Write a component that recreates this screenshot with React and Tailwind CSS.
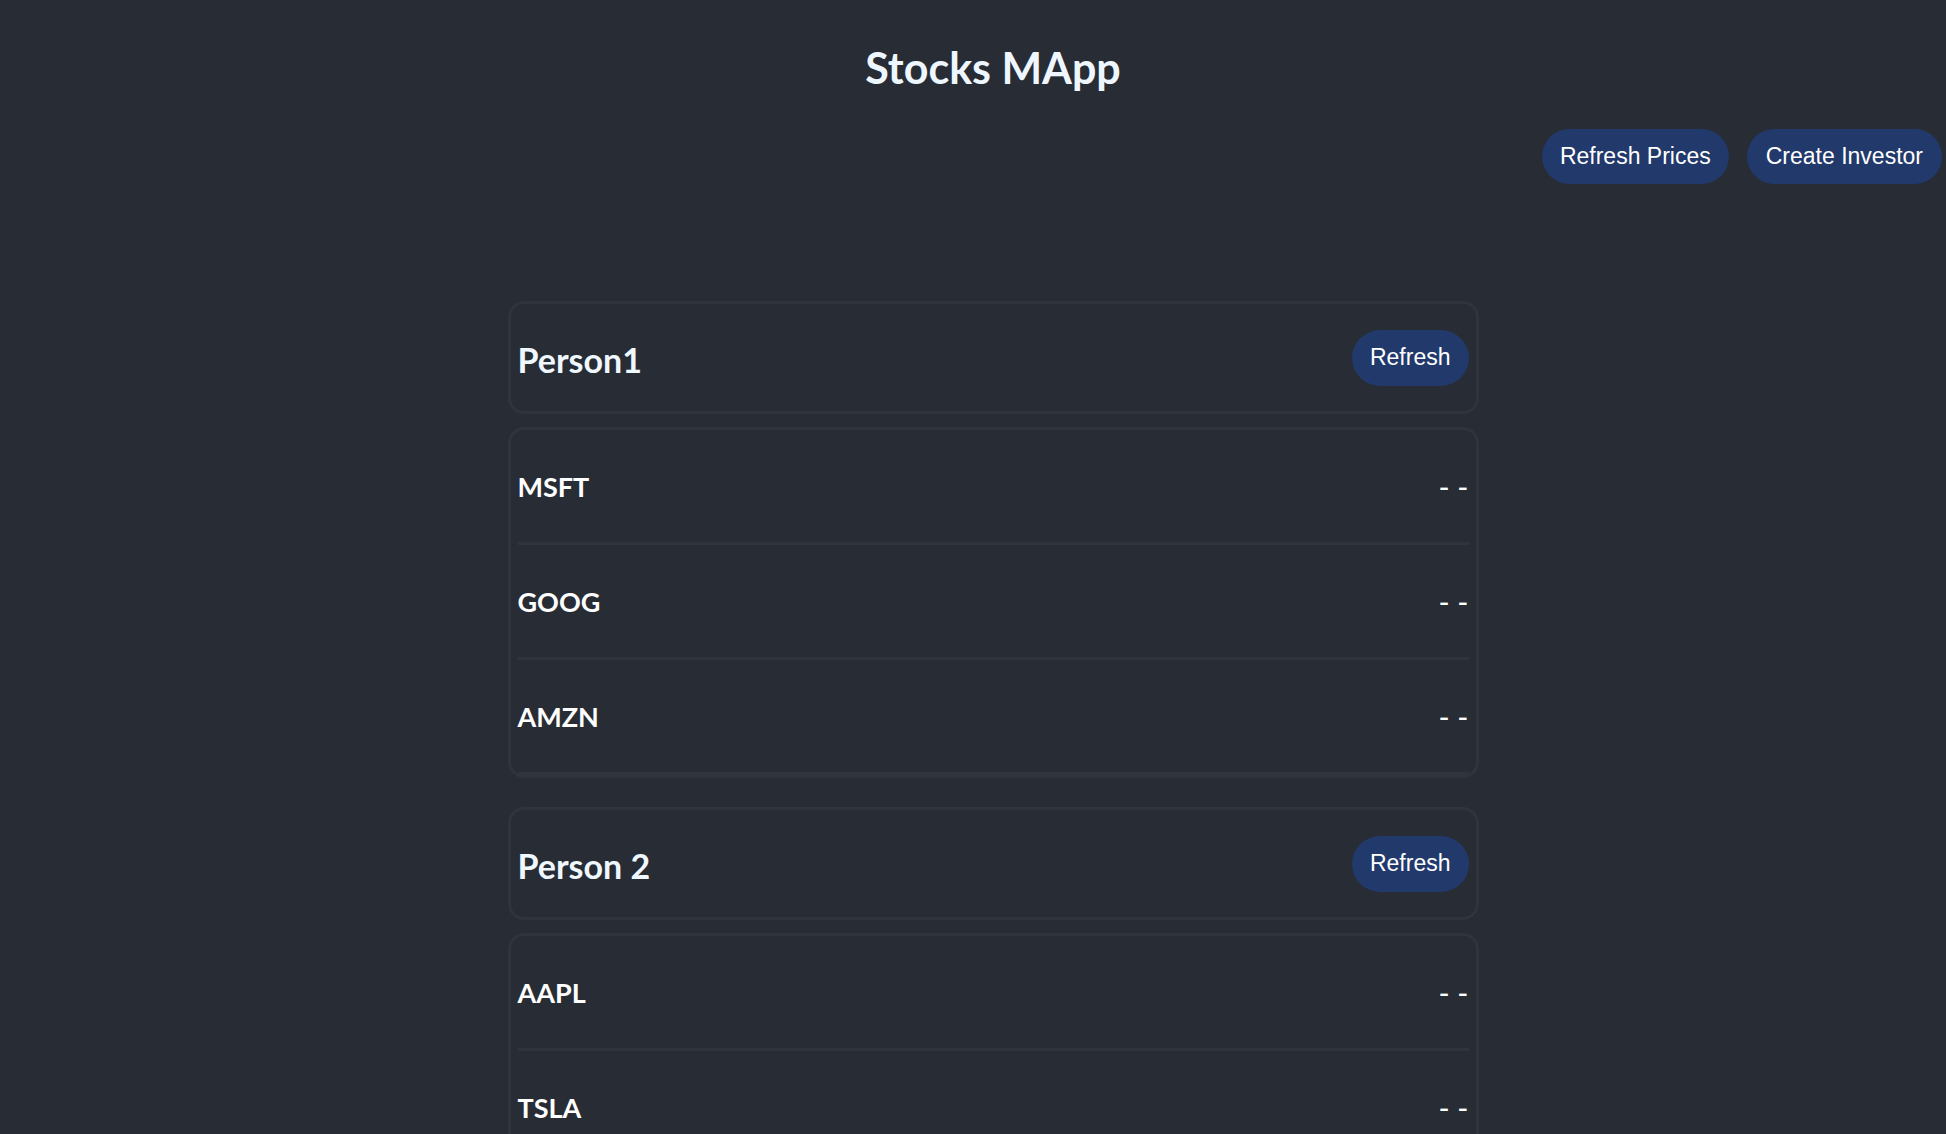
import React from "react";

const investors = [
  { name: "Person1", stocks: ["MSFT", "GOOG", "AMZN"] },
  { name: "Person 2", stocks: ["AAPL", "TSLA"] },
];

function PillButton({ children, className = "" }) {
  return (
    <button
      className={
        "rounded-full bg-[#22396b] text-white text-[23px] font-['Liberation_Sans',Arial,sans-serif] leading-none flex items-center justify-center " +
        className
      }
    >
      {children}
    </button>
  );
}

export default function App() {
  return (
    <div className="min-h-screen w-full bg-[#282c34] font-['Lato',sans-serif] pb-10">
      <div className="pl-[40px] pt-[40px] h-[96px]">
        <h1 className="text-center text-[43px] leading-[56px] font-bold text-[#eef6ff]">
          Stocks MApp
        </h1>
      </div>
      <div className="flex justify-end gap-[18px] pr-[4px] mt-[33px]">
        <PillButton className="h-[55px] px-[18px]">Refresh Prices</PillButton>
        <PillButton className="h-[55px] px-[19px]">Create Investor</PillButton>
      </div>
      <div className="flex flex-col items-center pl-[40px] mt-[117px]">
        <div className="w-[971px] flex flex-col gap-[29px]">
          {investors.map((inv) => (
            <div key={inv.name} className="flex flex-col gap-[13px]">
              <div className="h-[113px] border-[3px] border-[#30343c] rounded-[16px] px-[7px] flex items-center justify-between">
                <h2 className="text-[34px] font-bold text-[#f0f8ff] leading-none mt-[4px]">
                  {inv.name}
                </h2>
                <PillButton className="h-[56px] px-[18px]">Refresh</PillButton>
              </div>
              <div className="border-[3px] border-[#30343c] rounded-[16px] px-[7px]">
                {inv.stocks.map((s) => (
                  <div
                    key={s}
                    className="h-[115px] border-b-[3px] border-[#30343c] flex items-center justify-between"
                  >
                    <h3 className="text-[27px] font-bold text-white leading-none">{s}</h3>
                    <span className="text-[30px] text-white leading-none font-['Lato',sans-serif]">
                      - -
                    </span>
                  </div>
                ))}
              </div>
            </div>
          ))}
        </div>
      </div>
    </div>
  );
}
